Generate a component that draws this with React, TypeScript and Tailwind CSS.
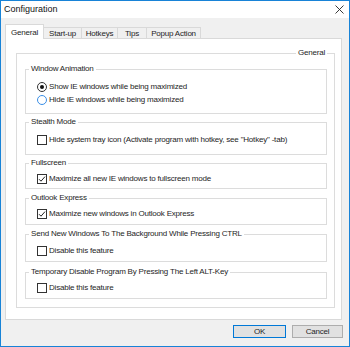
import React from "react";

const font = { fontFamily: '"Liberation Sans", Arial, sans-serif' };

function Radio({ checked, hover, label }: { checked?: boolean; hover?: boolean; label: string }) {
  return (
    <div className="flex h-[13px] items-center">
      <span
        className={
          "flex h-[10px] w-[10px] items-center justify-center rounded-full border bg-white " +
          (hover ? "border-[#3a8ee6]" : "border-[#333333]")
        }
      >
        {checked && <span className="h-[4px] w-[4px] rounded-full bg-[#111111]" />}
      </span>
      <span className="ml-[2px] leading-[10px]">{label}</span>
    </div>
  );
}

function Check({ checked, label }: { checked?: boolean; label: string }) {
  return (
    <div className="flex h-[13px] items-center">
      <span className="flex h-[10px] w-[10px] items-center justify-center border border-[#333333] bg-white">
        {checked && (
          <svg width="8" height="8" viewBox="0 0 8 8">
            <path d="M1 4.2 L3 6.2 L7 1.6" fill="none" stroke="#222" strokeWidth="1" />
          </svg>
        )}
      </span>
      <span className="ml-[2px] leading-[10px]">{label}</span>
    </div>
  );
}

function Group({
  title,
  className,
  children,
}: {
  title: string;
  className: string;
  children: React.ReactNode;
}) {
  return (
    <fieldset className={"border border-[#dcdcdc] px-[3px] " + className}>
      <legend className="px-[2px] leading-[10px]">{title}</legend>
      <div className="pl-[8px]">{children}</div>
    </fieldset>
  );
}

export default function App() {
  const tabs = [
    { t: "Start-up", w: "w-[39px]" },
    { t: "Hotkeys", w: "w-[37px]" },
    { t: "Tips", w: "w-[30px]" },
    { t: "Popup Action", w: "w-[55px]" },
  ];
  return (
    <div
      style={font}
      className="flex h-[347px] w-[350px] flex-col border border-[#1883d7] bg-[#f0f0f0] text-[8px] tracking-[-0.2px] text-[#1e1e1e]"
    >
      {/* title bar */}
      <div className="flex h-[17px] items-center justify-between bg-white pl-[3px] pr-[5px]">
        <span className="text-[9px] tracking-normal text-[#111]">Configuration</span>
        <svg width="9" height="9" viewBox="0 0 9 9">
          <path d="M0.5 0.5 L8.5 8.5 M8.5 0.5 L0.5 8.5" stroke="#222" strokeWidth="0.9" />
        </svg>
      </div>

      {/* tabs */}
      <div className="ml-[4px] flex h-[20px] w-[337px] items-end">
        <div className="relative z-10 -mb-px flex h-[15px] w-[39px] items-start justify-center border-x border-t border-[#d9d9d9] bg-white pt-[3px] leading-[9px]">
          General
        </div>
        {tabs.map((tb) => (
          <div
            key={tb.t}
            className={
              "-ml-px flex h-[11px] items-center justify-center border-x border-t border-[#d9d9d9] bg-[#f0f0f0] leading-[9px] " +
              tb.w
            }
          >
            {tb.t}
          </div>
        ))}
      </div>

      {/* tab body */}
      <div className="ml-[4px] w-[337px] border border-[#d9d9d9] bg-white pb-[11px] pl-[10px] pr-[6px] pt-[9px]">
        <fieldset className="border border-[#dcdcdc] pb-[8px] pl-[8px] pr-[7px]">
          <legend className="ml-auto px-[2px] leading-[10px]">General</legend>
          <div className="pt-[6px]">
            <Group title="Window Animation" className="pb-[7px]">
              <div className="pt-[6px]">
                <Radio checked label="Show IE windows while being maximized" />
                <Radio hover label="Hide IE windows while being maximized" />
              </div>
            </Group>
            <Group title="Stealth Mode" className="mt-[3px] pb-[8px]">
              <div className="pt-[6px]">
                <Check label={'Hide system tray icon (Activate program with hotkey, see "Hotkey" -tab)'} />
              </div>
            </Group>
            <Group title="Fullscreen" className="mt-[3px] pb-[3px]">
              <div className="pt-[4px]">
                <Check checked label="Maximize all new IE windows to fullscreen mode" />
              </div>
            </Group>
            <Group title="Outlook Express" className="mt-[4px] pb-[4px]">
              <div className="pt-[4px]">
                <Check checked label="Maximize new windows in Outlook Express" />
              </div>
            </Group>
            <Group title="Send New Windows To The Background While Pressing CTRL" className="mt-[4px] pb-[4px]">
              <div className="pt-[5px]">
                <Check label="Disable this feature" />
              </div>
            </Group>
            <Group title="Temporary Disable Program By Pressing The Left ALT-Key" className="mt-[5px] pb-[4px]">
              <div className="pt-[4px]">
                <Check label="Disable this feature" />
              </div>
            </Group>
          </div>
        </fieldset>
      </div>

      {/* buttons */}
      <div className="mt-[5px] flex w-[342px] justify-end gap-[6px]">
        <button className="flex h-[13px] w-[53px] items-center justify-center border border-[#0078d7] bg-[#e1e1e1] leading-[9px]">
          OK
        </button>
        <button className="flex h-[13px] w-[51px] items-center justify-center border border-[#adadad] bg-[#e1e1e1] leading-[9px]">
          Cancel
        </button>
      </div>
    </div>
  );
}
